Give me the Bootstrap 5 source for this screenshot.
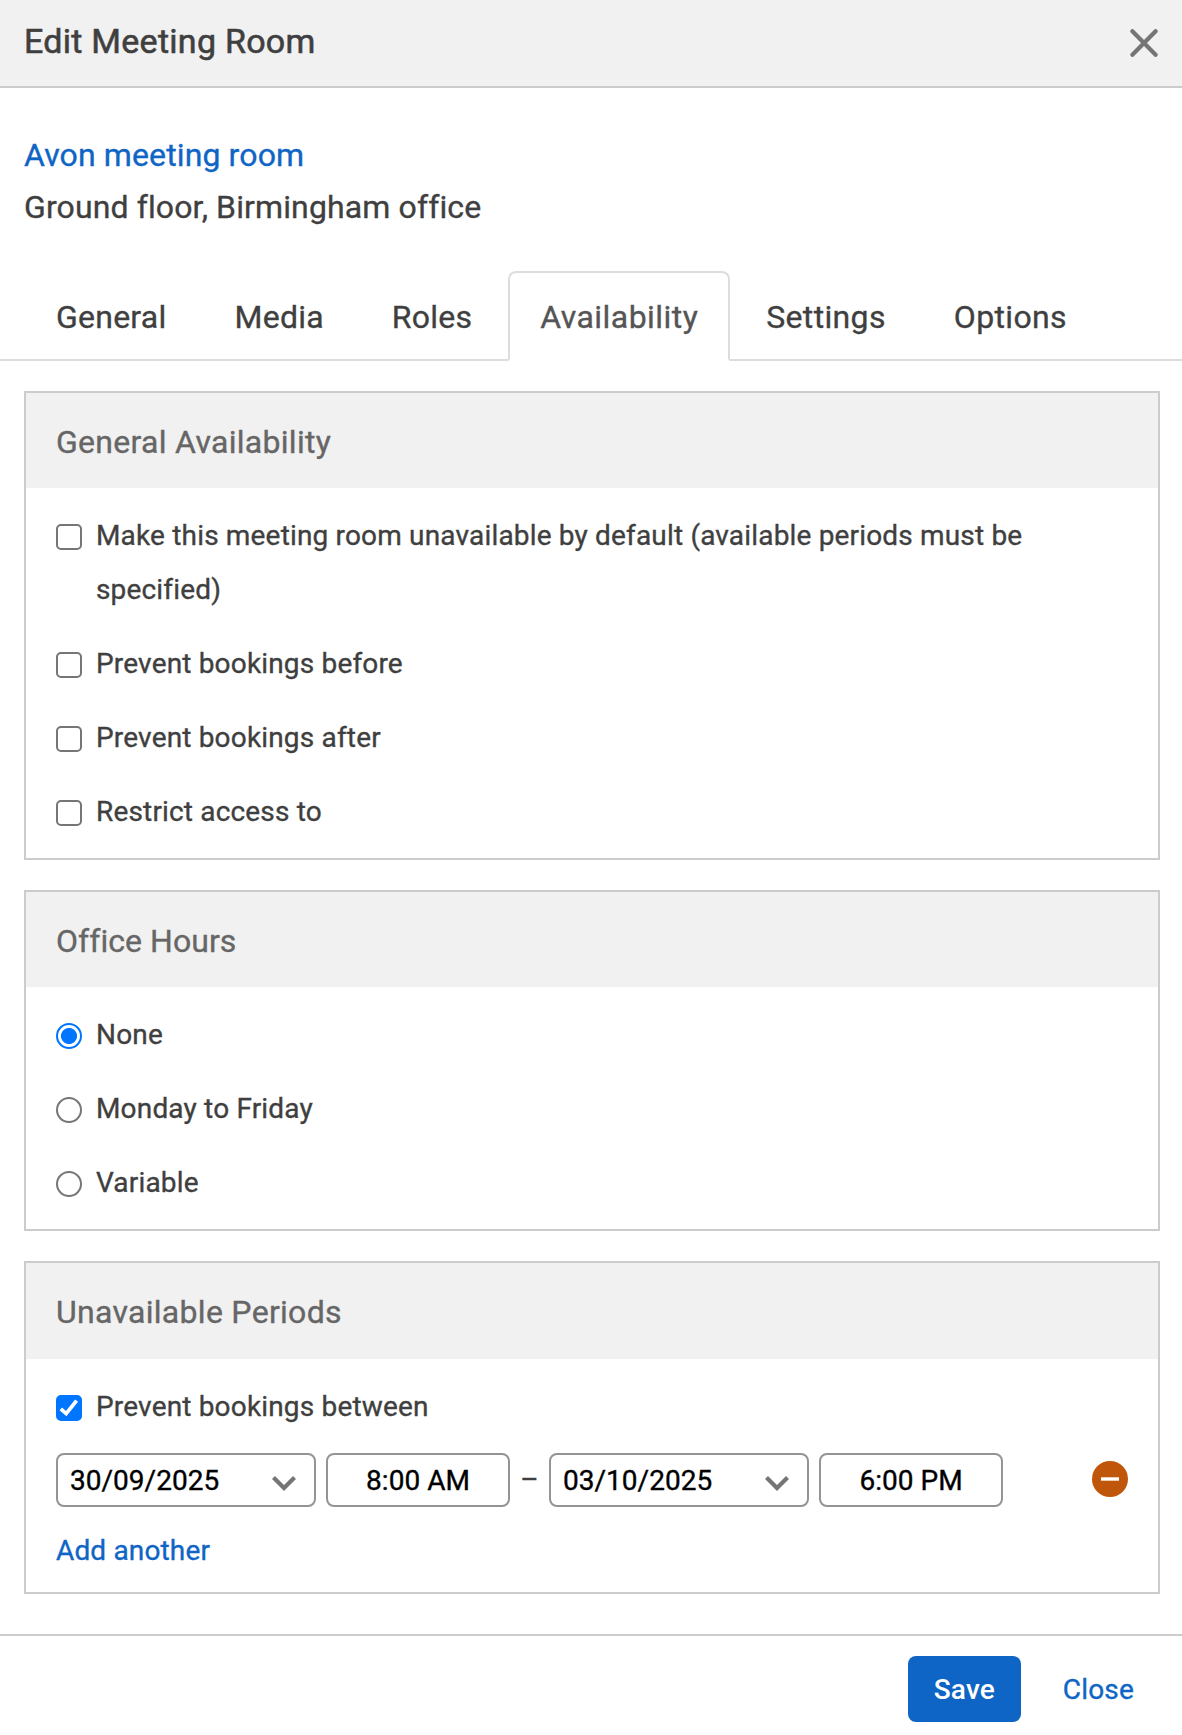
<!DOCTYPE html>
<html lang="en">
<head>
<meta charset="utf-8">
<meta name="viewport" content="width=device-width, initial-scale=1">
<title>Edit Meeting Room</title>
<link href="https://cdn.jsdelivr.net/npm/bootstrap@5.3.0/dist/css/bootstrap.min.css" rel="stylesheet">
<style>
  body { font-family: Roboto, "Liberation Sans", sans-serif; font-size: 28px; line-height: 54px; letter-spacing: .17px; color: #3f3f3f; background: #fff; -webkit-text-stroke: .35px currentColor; }
  .link-blue { color: #0f65c5; }
  .dialog-head { height: 88px; padding: 0 24px 3px; background: #f1f1f1; border-bottom: 2px solid #ccc; }
  .dialog-head h1 { font-size: 34px; line-height: 83px; font-weight: 400; letter-spacing: .27px; -webkit-text-stroke-width: .6px; }
  .dismiss { width: 28px; height: 28px; margin: 3px 0 0; }
  .room-info { padding: 41px 24px 38px; font-size: 32px; line-height: 52px; letter-spacing: .12px; }
  .tab-bar { padding: 0 24px; gap: 4px; border-bottom: 2px solid #ddd; }
  .tab-bar .nav-link { padding: 17px 30px 15px; font-size: 32px; line-height: 54px; letter-spacing: .24px; color: #3f3f3f; border: 2px solid transparent; border-radius: 8px 8px 0 0; margin-bottom: -2px; }
  .tab-bar .nav-link.active { color: #555; background: #fff; border-color: #ddd #ddd #fff; letter-spacing: .44px; }
  .tab-bar .nav-item:nth-child(n+5) .nav-link { letter-spacing: .34px; }
  .panels { padding: 30px 22px 40px 24px; gap: 30px; }
  .panel { border: 2px solid #ccc; border-radius: 0; color: inherit; }
  .panel > .card-header { padding: 3px 30px 0; background: #f1f1f1; border: 0; border-radius: 0; color: #666; font-size: 32px; line-height: 92px; letter-spacing: .29px; }
  .panel > .card-header.head-tight { letter-spacing: .05px; }
  .panel > .card-body { padding: 20px 30px; gap: 20px; }
  .panel-periods > .card-header { padding-bottom: 1px; }
  .panel-periods > .card-body { padding-bottom: 15px; }
  .choice { gap: 14px; }
  .choice > span { padding-top: 1px; margin-bottom: -1px; }
  .choice .form-check-input { width: 26px; height: 26px; margin: 16px 0 0; border: 2px solid #767676; }
  .choice .form-check-input[type=checkbox] { border-radius: 5px; }
  .choice .form-check-input:checked { border-color: #0075ff; }
  .choice .form-check-input[type=checkbox]:checked { background: #0075ff url("data:image/svg+xml,%3csvg xmlns='http://www.w3.org/2000/svg' viewBox='0 0 26 26'%3e%3cpath d='M4.8 13.8 10.2 18.6 20.6 5.6' fill='none' stroke='%23fff' stroke-width='3.8'/%3e%3c/svg%3e") center / 26px 26px no-repeat; background-origin: border-box; }
  .choice .form-check-input[type=radio]:checked { background: radial-gradient(circle, #0075ff 7.6px, #fff 8.4px); background-origin: border-box; background-clip: border-box; }
  .field { height: 54px; border: 2px solid #949494; border-radius: 8px; color: #000; line-height: 51px; letter-spacing: .02px; background: #fff; }
  .field-date { width: 260px; padding: 0 18px 0 12px; }
  .field-time { width: 184px; margin-left: 10px; }
  .to-dash { width: 39px; line-height: 53px; letter-spacing: 0; }
  .add-line { margin: -3px 0 -1px; letter-spacing: .15px; }
  .dialog-foot { border-top: 2px solid #ccc; padding: 20px 48px 13px; gap: 42px; line-height: 67px; height: 101px; }
  .btn-save { height: 66px; width: 113px; padding: 0; font-size: 28px; line-height: 67px; font-weight: 500; letter-spacing: .2px; color: #fff; background: #0f65c5; border: 0; border-radius: 8px; -webkit-text-stroke-width: 0; }
</style>
</head>
<body>
<header class="dialog-head d-flex justify-content-between align-items-center">
  <h1 class="m-0">Edit Meeting Room</h1>
  <svg class="dismiss" viewBox="0 0 28 28" role="button" aria-label="Close"><path d="M2.4 2.2 25.6 25.8M25.6 2.2 2.4 25.8" fill="none" stroke="#757575" stroke-width="4.2" stroke-linecap="round"/></svg>
</header>
<div class="room-info">
  <a href="#" class="link-blue text-decoration-none d-block">Avon meeting room</a>
  <div>Ground floor, Birmingham office</div>
</div>
<ul class="nav nav-tabs tab-bar flex-nowrap">
  <li class="nav-item"><a class="nav-link" href="#">General</a></li>
  <li class="nav-item"><a class="nav-link" href="#">Media</a></li>
  <li class="nav-item"><a class="nav-link" href="#">Roles</a></li>
  <li class="nav-item"><a class="nav-link active" href="#">Availability</a></li>
  <li class="nav-item"><a class="nav-link" href="#">Settings</a></li>
  <li class="nav-item"><a class="nav-link" href="#">Options</a></li>
</ul>
<main class="panels d-flex flex-column">
  <section class="card panel">
    <div class="card-header">General Availability</div>
    <div class="card-body d-flex flex-column">
      <label class="choice d-flex"><input class="form-check-input flex-shrink-0" type="checkbox"><span>Make this meeting room unavailable by default (available periods must be specified)</span></label>
      <label class="choice d-flex"><input class="form-check-input flex-shrink-0" type="checkbox"><span>Prevent bookings before</span></label>
      <label class="choice d-flex"><input class="form-check-input flex-shrink-0" type="checkbox"><span>Prevent bookings after</span></label>
      <label class="choice d-flex"><input class="form-check-input flex-shrink-0" type="checkbox"><span>Restrict access to</span></label>
    </div>
  </section>
  <section class="card panel">
    <div class="card-header head-tight">Office Hours</div>
    <div class="card-body d-flex flex-column">
      <label class="choice d-flex"><input class="form-check-input flex-shrink-0" type="radio" name="hours" checked><span>None</span></label>
      <label class="choice d-flex"><input class="form-check-input flex-shrink-0" type="radio" name="hours"><span>Monday to Friday</span></label>
      <label class="choice d-flex"><input class="form-check-input flex-shrink-0" type="radio" name="hours"><span>Variable</span></label>
    </div>
  </section>
  <section class="card panel panel-periods">
    <div class="card-header">Unavailable Periods</div>
    <div class="card-body d-flex flex-column">
      <label class="choice d-flex"><input class="form-check-input flex-shrink-0" type="checkbox" checked><span>Prevent bookings between</span></label>
      <div class="d-flex align-items-start">
        <div class="field field-date d-flex justify-content-between"><span>30/09/2025</span><svg class="mt-3" width="24" height="24" viewBox="0 0 24 24"><path d="M1.5 6.5 12 17 22.5 6.5" fill="none" stroke="#757575" stroke-width="4.2"/></svg></div>
        <div class="field field-time text-center">8:00 AM</div>
        <div class="to-dash text-center">–</div>
        <div class="field field-date d-flex justify-content-between"><span>03/10/2025</span><svg class="mt-3" width="24" height="24" viewBox="0 0 24 24"><path d="M1.5 6.5 12 17 22.5 6.5" fill="none" stroke="#757575" stroke-width="4.2"/></svg></div>
        <div class="field field-time text-center">6:00 PM</div>
        <svg class="ms-auto mt-2" width="36" height="36" viewBox="0 0 36 36" role="button" aria-label="Remove"><circle cx="18" cy="18" r="18" fill="#c0560a"/><path d="M9 18h18" stroke="#fff" stroke-width="3.4"/></svg>
      </div>
      <a href="#" class="link-blue text-decoration-none add-line">Add another</a>
    </div>
  </section>
</main>
<footer class="dialog-foot d-flex justify-content-end">
  <button type="button" class="btn btn-save">Save</button>
  <a href="#" class="link-blue text-decoration-none">Close</a>
</footer>
<script src="https://cdn.jsdelivr.net/npm/bootstrap@5.3.0/dist/js/bootstrap.bundle.min.js"></script>
</body>
</html>
